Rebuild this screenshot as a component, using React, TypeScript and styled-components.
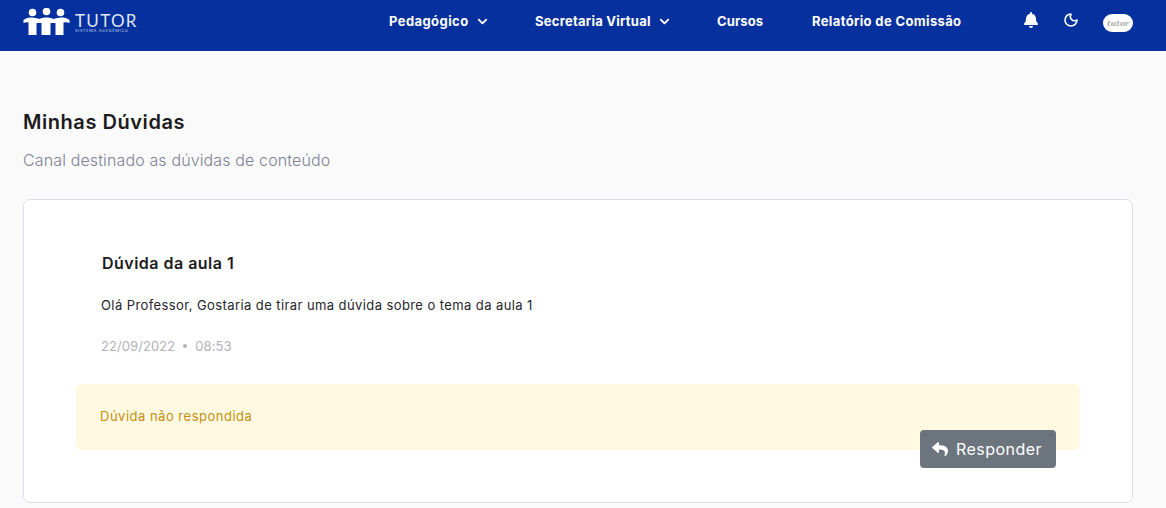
import React from "react";
import styled, { createGlobalStyle } from "styled-components";
import { ChevronDown, Moon } from "lucide-react";
import { FaBell, FaReply } from "react-icons/fa";

const Global = createGlobalStyle`
  html, body { margin: 0; padding: 0; background: #fafafa; height: 100%; overflow: hidden; }
  body { font-family: "Inter", "Liberation Sans", sans-serif; }
  * { box-sizing: border-box; }
`;

const Navbar = styled.header`
  height: 51px;
  background: #06309d;
  display: flex;
  align-items: flex-start;
  color: #fff;
`;
const Brand = styled.div`
  width: 389px;
  padding: 8px 0 0 23px;
  display: flex;
  align-items: flex-start;
  gap: 5px;
`;
const BrandText = styled.div`
  display: flex;
  flex-direction: column;
  color: #dfe6f6;
`;
const BrandName = styled.span`
  font-family: "Lato", sans-serif;
  font-size: 17px;
  letter-spacing: 1.3px;
  line-height: 15px;
  margin-top: 5px;
`;
const BrandSub = styled.span`
  font-size: 4px;
  letter-spacing: 0.62px;
  line-height: 5px;
  white-space: nowrap;
  opacity: .85;
`;
const Menu = styled.nav`
  display: flex;
  align-items: center;
  height: 42px;
`;
const MenuItem = styled.div<{ $w: number; $ls: number }>`
  width: ${p => p.$w}px;
  display: flex;
  align-items: center;
  gap: 6px;
  font-size: 13px;
  font-weight: 700;
  white-space: nowrap;
  letter-spacing: ${p => p.$ls}px;
`;
const Tools = styled.div`
  margin-left: auto;
  display: flex;
  align-items: center;
  height: 40px;
  padding-right: 33px;
`;
const ToolIcon = styled.span<{ $w: number }>`
  width: ${p => p.$w}px;
  display: flex;
  align-items: center;
`;
const Avatar = styled.div`
  width: 30px;
  height: 18px;
  margin-top: 6px;
  border-radius: 9px;
  background: #fff;
  color: #b0b0b0;
  font-family: "DejaVu Serif", serif;
  font-style: italic;
  font-weight: 700;
  font-size: 8px;
  letter-spacing: -0.2px;
  display: flex;
  align-items: center;
  justify-content: center;
`;
const Main = styled.main`
  padding: 58px 33px 0 23px;
`;
const Title = styled.h1`
  margin: 0;
  font-size: 20px;
  line-height: 26px;
  font-weight: 600;
  color: #1b1b20;
  letter-spacing: 0.55px;
`;
const Subtitle = styled.p`
  margin: 13px 0 0;
  font-size: 16px;
  line-height: 24px;
  font-weight: 300;
  color: #7f8296;
  letter-spacing: 0.13px;
`;
const Card = styled.section`
  margin-top: 27px;
  height: 304px;
  background: #fff;
  border: 1px solid #dedfe6;
  border-radius: 7px;
  padding: 51px 52px 0;
`;
const Body = styled.div`
  padding-left: 25px;
`;
const QuestionTitle = styled.h2`
  margin: 0 0 0 1px;
  font-size: 16px;
  line-height: 24px;
  font-weight: 600;
  color: #1b1b20;
  letter-spacing: 0.48px;
`;
const Question = styled.p`
  margin: 21px 0 0;
  font-size: 13px;
  line-height: 18px;
  color: #26262c;
  letter-spacing: 0.41px;
`;
const Meta = styled.div`
  margin-top: 23px;
  display: flex;
  align-items: center;
  gap: 8px;
  font-size: 13px;
  line-height: 18px;
  color: #b1b2b6;
  letter-spacing: 0.08px;
`;
const Dot = styled.span`
  width: 4px;
  height: 4px;
  border-radius: 50%;
  background: #b1b2b6;
`;
const Alert = styled.div`
  position: relative;
  margin-top: 29px;
  height: 66px;
  background: #fff9e1;
  border-radius: 6px;
  padding: 23px 24px 0;
  font-size: 13px;
  line-height: 18px;
  color: #c38f12;
  letter-spacing: 0.5px;
`;
const ReplyButton = styled.button`
  position: absolute;
  left: 844px;
  top: 46px;
  width: 136px;
  height: 38px;
  border: 0;
  border-radius: 4px;
  background: #6c757d;
  color: #fff;
  font: inherit;
  font-size: 16px;
  line-height: 24px;
  letter-spacing: 0.45px;
  display: flex;
  align-items: center;
  gap: 8px;
  padding: 0 0 0 12px;
`;

const Logo = () => (
  <svg width="47" height="27" viewBox="0 0 46 27" fill="#fff">
    <circle cx="9" cy="4.5" r="3.8" />
    <circle cx="23" cy="3.5" r="3.8" />
    <circle cx="37" cy="4.5" r="3.8" />
    <path d="M0 12 C6 8 12 10 16 11 C20 9 26 9 30 11 C34 10 40 8 46 12 L46 15 C44 14 42.5 14 40 14.5 L40 27 L32 27 L32 15 C31 15 30 15 27 15 L27 27 L18 27 L18 15 C17 15 15 15 13 15 L13 27 L5 27 L5 14.5 C4 14 2 14 0 15 Z" />
  </svg>
);

export default function App() {
  return (
    <>
      <Global />
      <Navbar>
        <Brand>
          <Logo />
          <BrandText>
            <BrandName>TUTOR</BrandName>
            <BrandSub>SISTEMA ACADÊMICO</BrandSub>
          </BrandText>
        </Brand>
        <Menu>
          <MenuItem $w={146} $ls={0.42}>Pedagógico <ChevronDown size={15} strokeWidth={3} /></MenuItem>
          <MenuItem $w={182} $ls={0.25}>Secretaria Virtual <ChevronDown size={15} strokeWidth={3} /></MenuItem>
          <MenuItem $w={95} $ls={0.12}>Cursos</MenuItem>
          <MenuItem $w={150} $ls={0.36}>Relatório de Comissão</MenuItem>
        </Menu>
        <Tools>
          <ToolIcon $w={40}><FaBell size={16} /></ToolIcon>
          <ToolIcon $w={40}><Moon size={16} strokeWidth={2.4} /></ToolIcon>
          <Avatar>tutor</Avatar>
        </Tools>
      </Navbar>
      <Main>
        <Title>Minhas Dúvidas</Title>
        <Subtitle>Canal destinado as dúvidas de conteúdo</Subtitle>
        <Card>
          <Body>
            <QuestionTitle>Dúvida da aula 1</QuestionTitle>
            <Question>Olá Professor, Gostaria de tirar uma dúvida sobre o tema da aula 1</Question>
            <Meta>22/09/2022 <Dot /> 08:53</Meta>
          </Body>
          <Alert>
            Dúvida não respondida
            <ReplyButton><FaReply size={16} /> Responder</ReplyButton>
          </Alert>
        </Card>
      </Main>
    </>
  );
}
